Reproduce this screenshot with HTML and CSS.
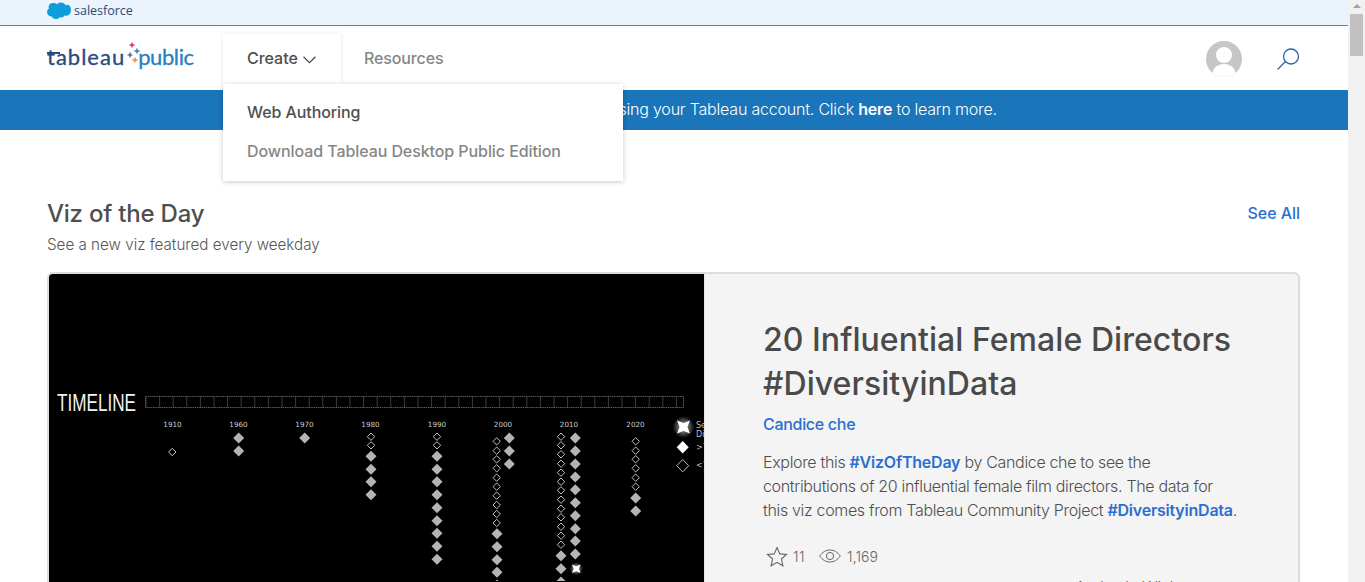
FILE: index.html
```html
<!DOCTYPE html>
<html lang="en">
<head>
<meta charset="utf-8">
<title>Tableau Public</title>
<link rel="stylesheet" href="styles.css">
</head>
<body>
<div class="page">
  <div class="sf-bar">
    <svg class="sf-cloud" viewBox="0 0 24 17" width="24" height="17"><path d="M10 2.200C11 1 12.400.4 14 .4c2 0 3.800 1.100 4.700 2.800.8-.3 1.500-.5 2.300-.5 0 0 3 .5 3 5.500 0 3.500-2.500 5.500-5.400 5.500-.4 0-.8 0-1.100-.1-.7 1.200-2 2-3.500 2-.6 0-1.200-.1-1.700-.4-.7 1.500-2.200 1.800-3.800 1.800-1.700 0-3.100-1-3.700-2.500-.3.100-.5.100-.8.100C1.800 14.100 0 12.300 0 10.100c0-1.500.8-2.800 2-3.500-.2-.5-.4-1.100-.4-1.700C1.600 2.400 3.600.9 6 .9c1.600 0 3 .5 4 1.300z" fill="#0d9dda"/></svg>
    <span class="sf-name">salesforce</span>
  </div>
  <header class="nav">
    <div class="logo">
      <span class="logo-dark"><span class="logo-t">t</span>ableau</span>
      <svg class="logo-plus" viewBox="0 0 20 26" width="20" height="26">
        <path d="M9 1.500v5M6.500 4h5" stroke="#d9304f" stroke-width="1.400"/>
        <path d="M7 11.500v5M4.500 14h5" stroke="#2b4a80" stroke-width="1.200"/>
        <path d="M14 7.500v5M11.500 10h5" stroke="#2a7fc0" stroke-width="1.400"/>
        <path d="M12 16.500v5M9.500 19h5" stroke="#ef8a3c" stroke-width="1.400"/>
      </svg>
      <span class="logo-blue">public</span>
    </div>
    <nav class="menu">
      <div class="menu-item active">Create
        <svg class="chev" viewBox="0 0 12 7" width="13" height="8"><path d="M.5.5 6 6 11.500.500" fill="none" stroke="#444" stroke-width="1"/></svg>
      </div>
      <div class="menu-item muted">Resources</div>
    </nav>
    <div class="nav-right">
      <svg class="avatar" viewBox="0 0 36 36" width="36" height="36"><defs><clipPath id="av"><circle cx="18" cy="18" r="18"/></clipPath></defs><g clip-path="url(#av)"><rect width="36" height="36" fill="#c6c6c6"/><circle cx="18" cy="14" r="8" fill="#fff"/><path d="M6 36c0-9 5-13 12-13s12 4 12 13z" fill="#fff"/></g></svg>
      <svg class="search" viewBox="0 0 24 24" width="24" height="24"><circle cx="15" cy="9.500" r="7.500" fill="none" stroke="#2f62a8" stroke-width="1.300"/><path d="M9.500 14.500 1.500 22.500" stroke="#2f62a8" stroke-width="1.300"/></svg>
    </div>
  </header>
  <div class="banner">You can sign in to Tableau Public using your Tableau account. Click <b>here</b> to learn more.</div>
  <main class="main">
    <div class="section-head">
      <div>
        <h2 class="section-title">Viz of the Day</h2>
        <p class="section-sub">See a new viz featured every weekday</p>
      </div>
      <a class="see-all">See All</a>
    </div>
    <section class="card">
      <div class="viz">
        <svg class="viz-svg" viewBox="49 275 655 307" width="655" height="307">
          <defs>
            <path id="f" d="M0-5.500 5.500 0 0 5.500-5.500 0z" fill="#b4b4b4"/>
            <path id="o" d="M0-3.700 3.700 0 0 3.700-3.700 0z" fill="none" stroke="#c0c0c0" stroke-width="1"/>
            <pattern id="cells" x="145.500" y="397" width="13.600" height="11" patternUnits="userSpaceOnUse"><path d="M.5 0V11" stroke="#3c3c3c" stroke-width="1" fill="none"/></pattern>
            <radialGradient id="glow"><stop offset="0" stop-color="#fff"/><stop offset=".5" stop-color="#ccc"/><stop offset="1" stop-color="#000"/></radialGradient>
          </defs>
          <text class="tl-title" x="57" y="412" textLength="79" lengthAdjust="spacingAndGlyphs">TIMELINE</text>
          <rect x="145.500" y="397.500" width="538" height="11" fill="url(#cells)" stroke="#5a5a5a" stroke-dasharray="1.500 .7"/>
          <g class="years">
            <text x="172.500" y="428">1910</text><text x="238.500" y="428">1960</text><text x="304.500" y="428">1970</text><text x="370.500" y="428">1980</text><text x="437" y="428">1990</text><text x="503" y="428">2000</text><text x="569" y="428">2010</text><text x="635.500" y="428">2020</text>
          </g>
          <use href="#o" x="172.300" y="453"/>
          <use href="#f" x="238.700" y="439"/><use href="#f" x="238.700" y="452"/>
          <use href="#f" x="304.700" y="439"/>
          <use href="#o" x="371" y="437.700"/><use href="#o" x="371" y="446.300"/>
          <use href="#f" x="371" y="457.300"/><use href="#f" x="371" y="470.300"/><use href="#f" x="371" y="482.700"/><use href="#f" x="371" y="495.700"/>
          <use href="#o" x="437" y="437.700"/><use href="#o" x="437" y="446.300"/>
          <use href="#f" x="437" y="457.300"/><use href="#f" x="437" y="470.300"/><use href="#f" x="437" y="482.700"/><use href="#f" x="437" y="495.700"/><use href="#f" x="437" y="508.700"/><use href="#f" x="437" y="521.700"/><use href="#f" x="437" y="534.300"/><use href="#f" x="437" y="547.300"/><use href="#f" x="437" y="560.300"/>
          <use href="#o" x="496.700" y="442.300"/><use href="#o" x="496.700" y="451.700"/><use href="#o" x="496.700" y="460.300"/><use href="#o" x="496.700" y="469.300"/><use href="#o" x="496.700" y="478.700"/><use href="#o" x="496.700" y="487.700"/><use href="#o" x="496.700" y="496.700"/><use href="#o" x="496.700" y="506"/><use href="#o" x="496.700" y="515"/><use href="#o" x="496.700" y="524"/>
          <use href="#f" x="497" y="534.700"/><use href="#f" x="497" y="547.700"/><use href="#f" x="497" y="560.700"/><use href="#f" x="497" y="573.300"/><use href="#f" x="497" y="586"/>
          <use href="#f" x="509.300" y="439"/><use href="#f" x="509.300" y="452"/><use href="#f" x="509.300" y="465"/>
          <use href="#o" x="561" y="437.700"/><use href="#o" x="561" y="446.300"/><use href="#o" x="561" y="455.300"/><use href="#o" x="561" y="464.700"/><use href="#o" x="561" y="473.700"/><use href="#o" x="561" y="482.700"/><use href="#o" x="561" y="491.300"/><use href="#o" x="561" y="500.700"/><use href="#o" x="561" y="509.700"/><use href="#o" x="561" y="518.300"/><use href="#o" x="561" y="527.700"/><use href="#o" x="561" y="536.700"/><use href="#o" x="561" y="545.700"/>
          <use href="#f" x="561" y="556.700"/><use href="#f" x="561" y="569.700"/><use href="#f" x="561" y="583"/>
          <use href="#f" x="575.300" y="439"/><use href="#f" x="575.300" y="452"/><use href="#f" x="575.300" y="465"/><use href="#f" x="575.300" y="478"/><use href="#f" x="575.300" y="490.700"/><use href="#f" x="575.300" y="503.700"/><use href="#f" x="575.300" y="516.700"/><use href="#f" x="575.300" y="529.700"/><use href="#f" x="575.300" y="542"/><use href="#f" x="575.300" y="555"/>
          <circle cx="576.300" cy="569.700" r="6.500" fill="url(#glow)" opacity=".5"/>
          <path d="M572 565.500l4.300 1.700 4.300-1.700-1.700 4.200 1.700 4.300-4.300-1.700-4.300 1.700 1.700-4.300z" fill="#fff"/>
          <use href="#o" x="635.700" y="442.300"/><use href="#o" x="635.700" y="451.700"/><use href="#o" x="635.700" y="460.300"/><use href="#o" x="635.700" y="469.300"/><use href="#o" x="635.700" y="478.700"/><use href="#o" x="635.700" y="487.700"/>
          <use href="#f" x="635.700" y="499"/><use href="#f" x="635.700" y="512"/>
          <circle cx="683.500" cy="428" r="11" fill="url(#glow)" opacity=".45"/>
          <path d="M677 421.500l6.500 2.500 6.500-2.500-2.500 6.500 2.500 6.500-6.500-2.500-6.500 2.500 2.500-6.500z" fill="#fff"/>
          <path d="M682.700 442l6 6.300-6 6.300-6-6.300z" fill="#fff"/>
          <path d="M682.700 460.500l6 6.200-6 6.200-6-6.200z" fill="none" stroke="#bbb"/>
          <g class="legend"><text x="696" y="429">Se</text><text x="696" y="438">Di</text><text x="696" y="451">&gt;7</text><text x="696" y="469">&lt;7</text></g>
        </svg>
      </div>
      <div class="info">
        <h3 class="viz-title">20 Influential Female Directors #DiversityinData</h3>
        <a class="author">Candice che</a>
        <p class="desc">Explore this <a>#VizOfTheDay</a> by Candice che to see the contributions of 20 influential female film directors. The data for this viz comes from Tableau Community Project <a>#DiversityinData</a>.</p>
        <div class="stats">
          <svg class="star" viewBox="0 0 22 21" width="22" height="21"><path d="M11 1.500l2.800 6.400 6.700.6-5.100 4.500 1.500 6.800L11 16.300l-5.900 3.500 1.500-6.800L1.500 8.500l6.700-.6z" fill="none" stroke="#666" stroke-width="1.100"/></svg>
          <span class="count first">11</span>
          <svg viewBox="0 0 22 14" width="22" height="14"><path d="M.7 7C3.500 3 7 1 11 1s7.500 2 10.300 6c-2.800 4-6.300 6-10.300 6S3.500 11 .7 7z" fill="none" stroke="#666"/><circle cx="11" cy="7" r="3.600" fill="none" stroke="#666"/></svg>
          <span class="count">1,169</span>
        </div>
        <p class="more">Author's Wish</p>
      </div>
    </section>
  </main>
  <div class="dropdown">
    <div class="drop-item">Web Authoring</div>
    <div class="drop-item muted">Download Tableau Desktop Public Edition</div>
  </div>
  <div class="scrollbar"><span class="arrow"></span><span class="thumb"></span></div>
</div>
</body>
</html>
```
FILE: styles.css
```css
* { box-sizing: border-box; }
html, body { margin: 0; height: 100%; overflow: hidden; background: #fff; }
body { font-family: Inter, "Liberation Sans", sans-serif; color: #4f4f4f; }
.page { position: relative; width: 1365px; height: 582px; overflow: hidden; padding-right: 17px; }

.sf-bar { height: 26px; background: #ebf3fd; border-bottom: 1px solid #3a90c8; padding-left: 47px; display: flex; align-items: flex-start; gap: 3px; padding-top: 2px; }
.sf-cloud { flex: none; }
.sf-name { font: 500 12.500px/17px "Open Sans", sans-serif; color: #2c4a72; }

.nav { height: 64px; display: flex; align-items: flex-start; padding: 0 48px 0 47px; }
.logo { width: 176px; height: 64px; display: flex; align-items: center; padding-bottom: 2px; font: 400 22px/1 Lato, sans-serif; -webkit-text-stroke: .3px; }
.logo-dark { color: #2b4a80; letter-spacing: 1px; }
.logo-t { position: relative; }
.logo-t::after { content: ""; position: absolute; left: 0; top: 9px; width: 13px; height: 2px; background: #2b4a80; }
.logo-blue { color: #2a7fc0; letter-spacing: -.4px; }
.logo-plus { flex: none; margin: -6px -5px 0 -2px; }
.menu { display: flex; }
.menu-item { height: 50px; margin-top: 8px; padding-bottom: 2px; display: flex; align-items: center; font-size: 16px; font-weight: 500; color: #4f4f4f; letter-spacing: -.02px; }
.menu-item.active { width: 118px; padding-left: 24px; gap: 5px; box-shadow: 0 0 4px rgba(0, 0, 0, .1); clip-path: inset(-6px -6px 0 -6px); background: #fff; }
.chev { margin-top: 3px; }
.menu-item.muted { padding-left: 23px; color: #868686; letter-spacing: -.12px; }
.nav-right { margin-left: auto; display: flex; align-items: center; gap: 34px; height: 64px; padding-top: 2px; }
.search { margin-top: -1px; }

.banner { height: 40px; background: #1a75bb; color: #fff; font-size: 16px; line-height: 39px; text-align: center; font-weight: 300; padding-left: 15px; letter-spacing: -.2px; }
.banner b { font-weight: 600; }

.main { padding: 70px 48px 0 47px; }
.section-head { display: flex; justify-content: space-between; align-items: flex-start; }
.section-title { margin: 0; font-size: 24px; line-height: 28px; font-weight: 500; color: #4f4f4f; letter-spacing: -.22px; }
.section-sub { margin: 7px 0 0; font-size: 15.200px; line-height: 20px; font-weight: 300; color: #555; }
.see-all { font-size: 16px; line-height: 26px; font-weight: 500; color: #2a6fd0; letter-spacing: -.05px; }

.card { margin-top: 17px; height: 340px; display: flex; border: 2px solid #ddd; border-radius: 6px; overflow: hidden; background: #f4f4f4; }
.viz { flex: none; width: 655px; background: #000; overflow: hidden; }
.viz-svg { display: block; }
.tl-title { font: 400 24px "Liberation Sans", sans-serif; fill: #f2f2f2; }
.years text { font: 7.200px "DejaVu Sans", sans-serif; fill: #ccc; text-anchor: middle; }
.legend text { font: 8px "DejaVu Sans", sans-serif; fill: #bbb; }
.info { flex: 1; border-left: 1px solid #e6e6e6; padding: 44px 40px 0 58px; }
.viz-title { margin: 0; font-size: 32px; line-height: 44px; font-weight: 500; color: #4a4a4a; letter-spacing: .06px; }
.author { display: block; margin-top: 6px; font-size: 16px; line-height: 24px; font-weight: 500; color: #2a6fd0; letter-spacing: -.3px; }
.desc { margin: 14px 0 0; font-size: 16px; line-height: 24px; font-weight: 300; color: #4f4f4f; width: 477px; letter-spacing: -.33px; }
.desc a { font-weight: 600; color: #2a6fd0; letter-spacing: -.22px; }
.stats { margin-top: 22px; display: flex; align-items: center; height: 24px; }
.star { margin-left: 3px; }
.count { font-size: 14px; font-weight: 300; color: #666; margin-left: 6px; letter-spacing: .1px; }
.count.first { margin-left: 5px; margin-right: 14px; letter-spacing: .5px; }
.more { margin: 9px 0 0; font-size: 16px; padding-left: 312px; font-weight: 300; color: #666; }

.dropdown { position: absolute; left: 223px; top: 84px; width: 400px; height: 97px; background: #fff; box-shadow: 0 1px 5px rgba(0, 0, 0, .22); padding: 9px 0 0 24px; }
.drop-item { font-size: 16px; line-height: 39px; font-weight: 500; color: #4f4f4f; letter-spacing: -.08px; }
.drop-item.muted { color: #868686; }

.scrollbar { position: absolute; right: 0; top: 0; width: 17px; height: 582px; background: #f1f1f1; }
.arrow { position: absolute; left: 5px; top: 4px; border: 4px solid transparent; border-top: 0; border-bottom: 4px solid #a3a3a3; }
.thumb { position: absolute; left: 2px; top: 14px; width: 13px; height: 42px; background: #c1c1c1; }
```
